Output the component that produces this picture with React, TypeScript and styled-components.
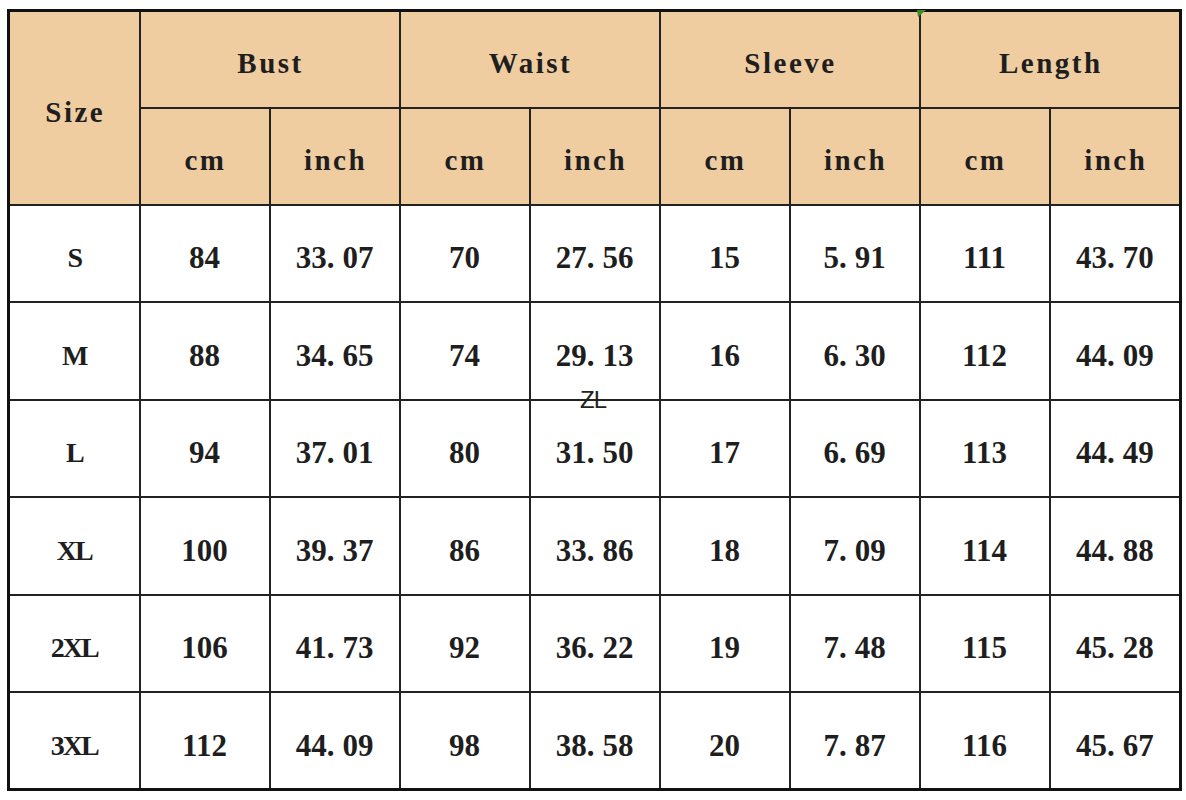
import React from 'react';
import styled, { createGlobalStyle } from 'styled-components';

const GlobalStyle = createGlobalStyle`
  html, body {
    margin: 0;
    padding: 0;
    background: #fff;
  }
  body {
    width: 1186px;
    height: 800px;
    overflow: hidden;
  }
`;

const Page = styled.div`
  position: relative;
  padding: 9px 6px 9px 7px;
`;

const Table = styled.table`
  width: 1173px;
  height: 780px;
  border-collapse: collapse;
  table-layout: fixed;
  border: 3px solid #111;
  color: #1e1e1e;
`;

const HeadRow = styled.tr`
  height: 97px;
`;

const BodyRow = styled.tr`
  height: 97.5px;
`;

const HeadCell = styled.th`
  background: #efcda1;
  border: 2px solid #222;
  padding: 9px 0 0 2px;
  font-family: 'Liberation Serif', 'Times New Roman', serif;
  font-weight: 700;
  font-size: 29px;
  letter-spacing: 2.5px;
  text-align: center;
  vertical-align: middle;
`;

const Cell = styled.td<{ $size?: boolean }>`
  background: #fff;
  border: 2px solid #222;
  padding: 10px 0 0;
  font-family: 'Liberation Serif', 'Times New Roman', serif;
  font-weight: 700;
  font-size: ${(p) => (p.$size ? '28px' : '31px')};
  letter-spacing: ${(p) => (p.$size ? '-2px' : '0')};
  text-align: center;
  vertical-align: middle;
`;

const Dot = styled.span`
  padding-right: 8px;
`;

const Watermark = styled.div`
  position: absolute;
  left: 580px;
  top: 386px;
  font-family: 'Liberation Sans', Arial, sans-serif;
  font-size: 24px;
  letter-spacing: -1px;
  color: #222;
`;

const Tick = styled.svg`
  position: absolute;
  left: 917px;
  top: 10px;
`;

const groups = ['Bust', 'Waist', 'Sleeve', 'Length'];

const rows: [string, string[]][] = [
  ['S', ['84', '33.07', '70', '27.56', '15', '5.91', '111', '43.70']],
  ['M', ['88', '34.65', '74', '29.13', '16', '6.30', '112', '44.09']],
  ['L', ['94', '37.01', '80', '31.50', '17', '6.69', '113', '44.49']],
  ['XL', ['100', '39.37', '86', '33.86', '18', '7.09', '114', '44.88']],
  ['2XL', ['106', '41.73', '92', '36.22', '19', '7.48', '115', '45.28']],
  ['3XL', ['112', '44.09', '98', '38.58', '20', '7.87', '116', '45.67']],
];

const Num = ({ value }: { value: string }) => {
  const [whole, frac] = value.split('.');
  if (frac === undefined) return <>{value}</>;
  return (
    <>
      {whole}
      <Dot>.</Dot>
      {frac}
    </>
  );
};

const App = () => {
  return (
    <Page>
      <GlobalStyle />
      <Table>
        <colgroup>
          <col style={{ width: 131 }} />
          {Array.from({ length: 8 }).map((_, i) => (
            <col key={i} style={{ width: i === 7 ? 131 : 130 }} />
          ))}
        </colgroup>
        <thead>
          <HeadRow>
            <HeadCell rowSpan={2}>Size</HeadCell>
            {groups.map((g) => (
              <HeadCell key={g} colSpan={2}>
                {g}
              </HeadCell>
            ))}
          </HeadRow>
          <HeadRow>
            {groups.map((g) => (
              <React.Fragment key={g}>
                <HeadCell>cm</HeadCell>
                <HeadCell>inch</HeadCell>
              </React.Fragment>
            ))}
          </HeadRow>
        </thead>
        <tbody>
          {rows.map(([size, vals]) => (
            <BodyRow key={size}>
              <Cell $size>{size}</Cell>
              {vals.map((v, i) => (
                <Cell key={i}>
                  <Num value={v} />
                </Cell>
              ))}
            </BodyRow>
          ))}
        </tbody>
      </Table>
      <Watermark>ZL</Watermark>
      <Tick width="10" height="8" viewBox="0 0 10 8">
        <path d="M0 0 L9 0 L1 7 Z" fill="#3d8a2a" />
      </Tick>
    </Page>
  );
};

export default App;
